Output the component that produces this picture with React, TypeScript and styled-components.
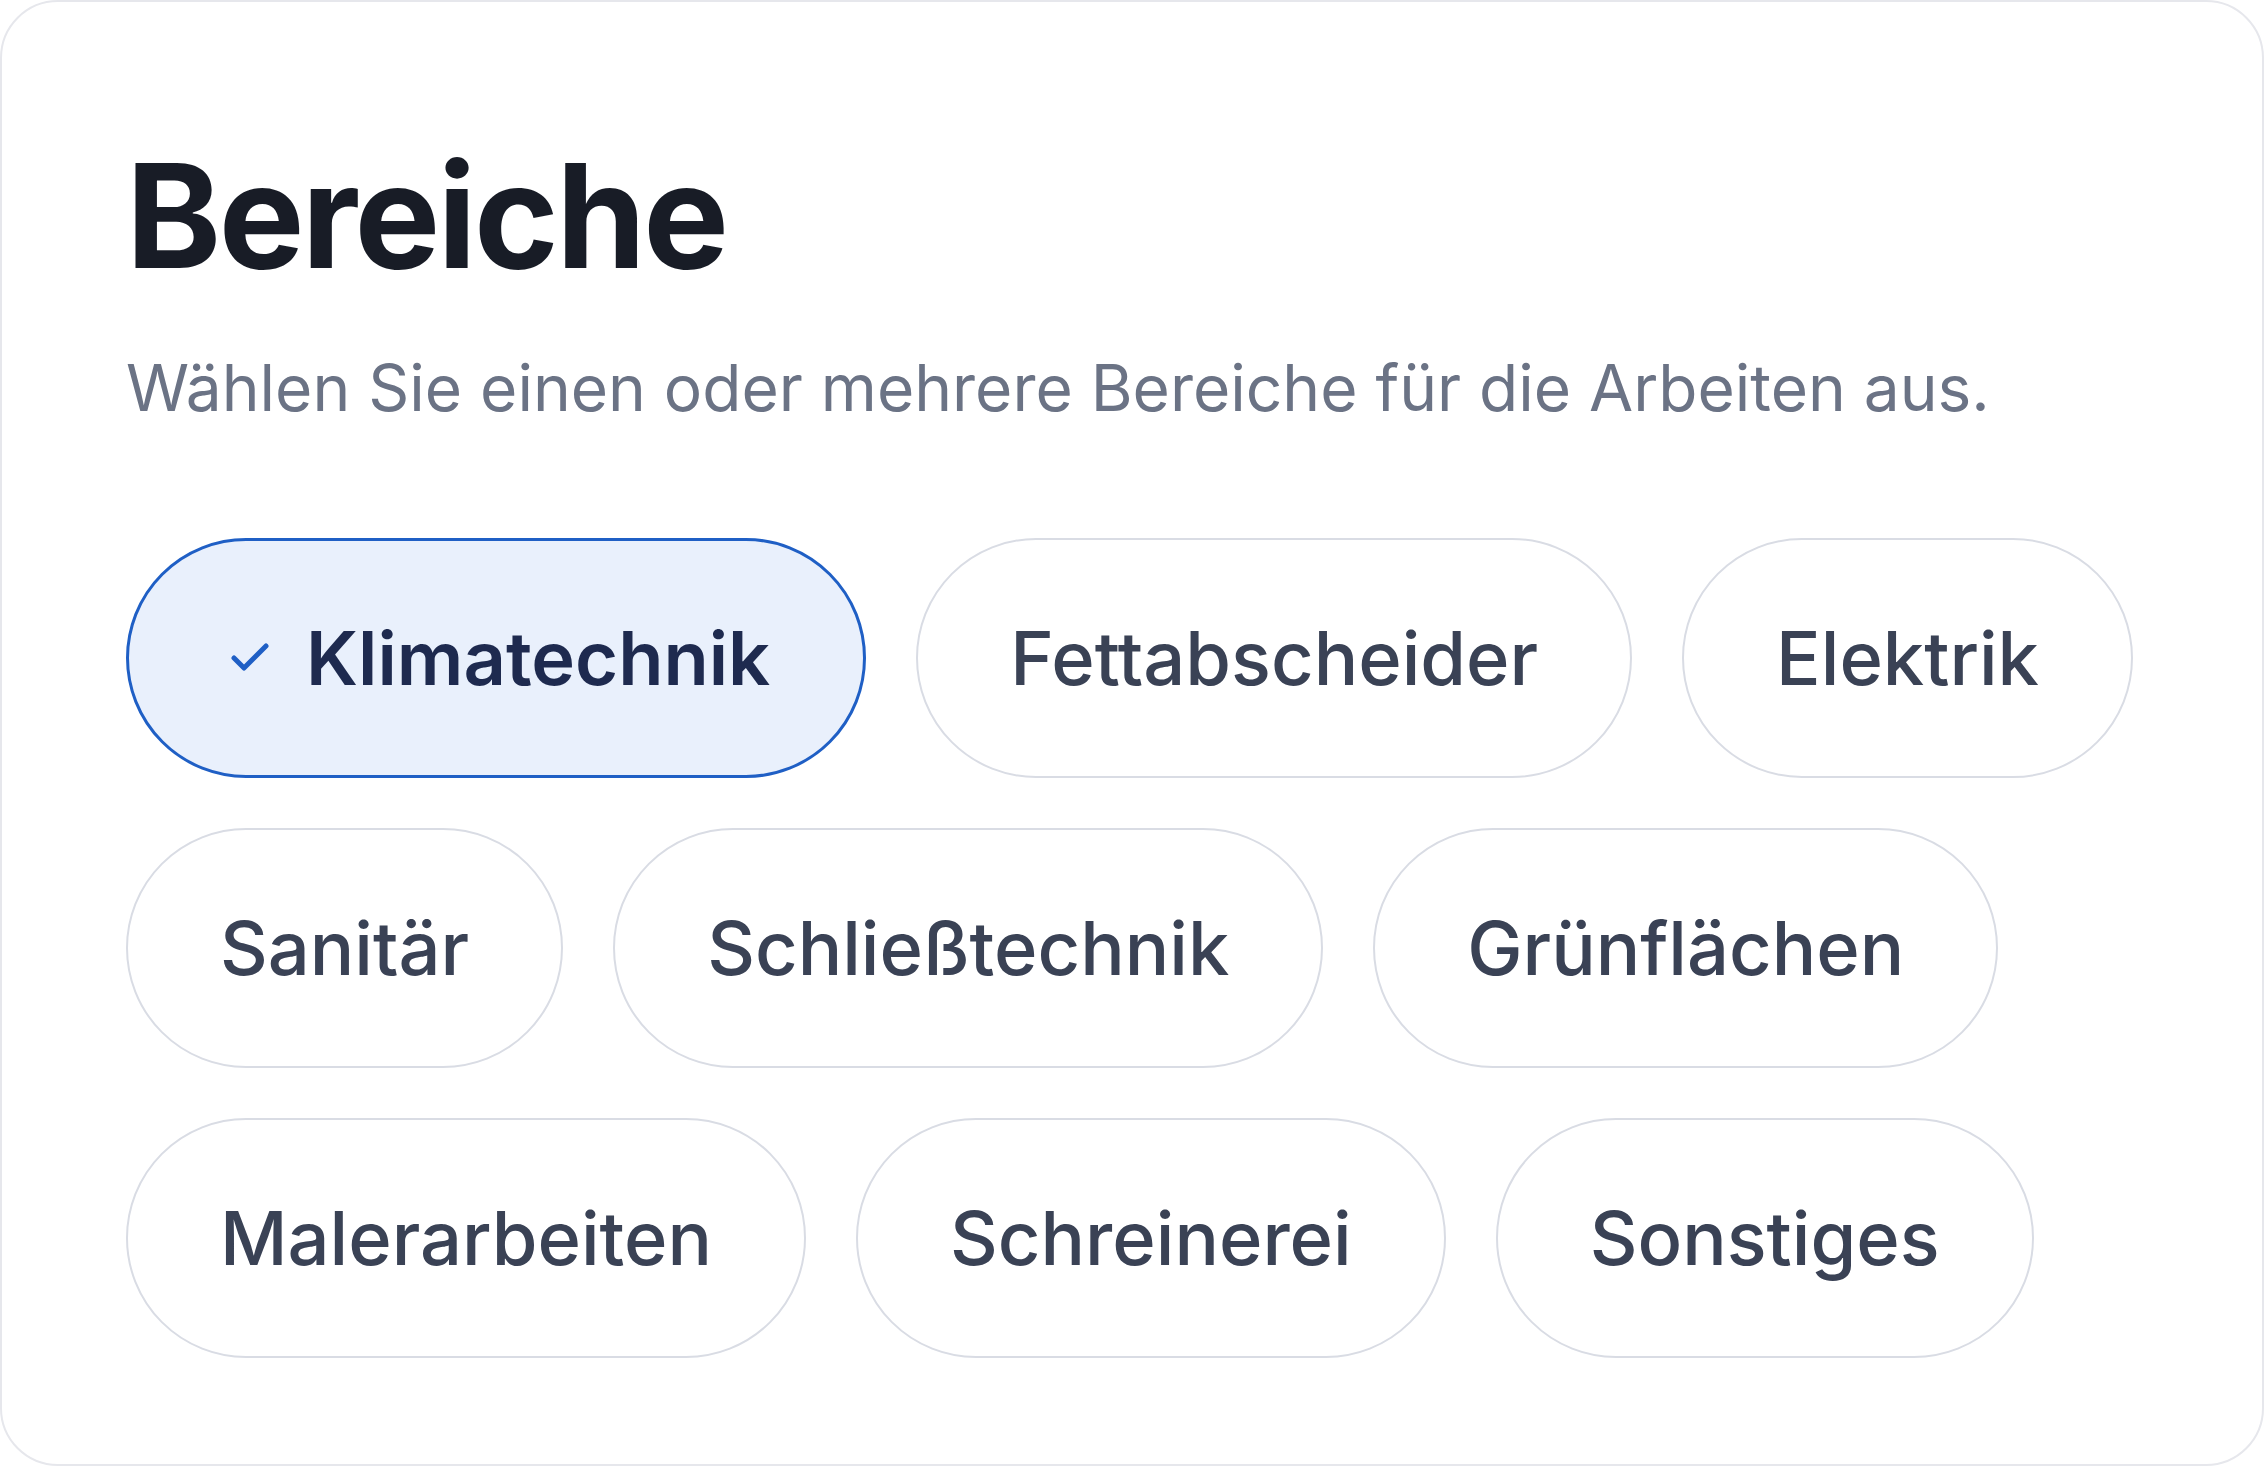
import React, { useState } from "react";
import styled, { createGlobalStyle, css } from "styled-components";

const GlobalStyle = createGlobalStyle`
  html, body {
    margin: 0;
    padding: 0;
    background: #ffffff;
  }
  body {
    font-family: Inter, "Noto Sans", "Liberation Sans", sans-serif;
    -webkit-font-smoothing: antialiased;
  }
  * { box-sizing: border-box; }
`;

const Card = styled.section`
  width: 2264px;
  height: 1466px;
  border: 2px solid #e6e7ec;
  border-radius: 58px;
  background: #ffffff;
  padding: 126px 80px 0 124px;
  display: flex;
  flex-direction: column;
  overflow: hidden;
`;

const Title = styled.h1`
  margin: 0;
  font-size: 144px;
  font-weight: 700;
  line-height: normal;
  letter-spacing: -0.018em;
  color: #181c26;
`;

const Subtitle = styled.p`
  margin: 37px 0 0 0;
  font-size: 64px;
  font-weight: 400;
  line-height: 1.5;
  color: #6b7385;
`;

const ChipList = styled.div`
  margin-top: 102px;
  display: flex;
  flex-wrap: wrap;
  gap: 50px;
  max-width: 2040px;
`;

const Chip = styled.button<{ $selected: boolean }>`
  height: 240px;
  border-radius: 9999px;
  display: inline-flex;
  align-items: center;
  gap: 32px;
  font-family: inherit;
  font-size: 74px;
  line-height: 1;
  cursor: pointer;
  ${({ $selected }) =>
    $selected
      ? css`
          padding: 0 93px 0 97px;
          border: 3px solid #1f5fc5;
          background: #e9f0fc;
          color: #1e2a4f;
          font-weight: 600;
        `
      : css`
          padding: 0 92px;
          border: 2px solid #d9dce4;
          background: #ffffff;
          color: #3a4255;
          font-weight: 500;
        `}
`;

const CheckIcon = styled.svg`
  width: 48px;
  height: 48px;
  flex: none;
  color: #1f5fc5;
`;

const items = [
  "Klimatechnik",
  "Fettabscheider",
  "Elektrik",
  "Sanitär",
  "Schließtechnik",
  "Grünflächen",
  "Malerarbeiten",
  "Schreinerei",
  "Sonstiges",
];

export default function App() {
  const [selected, setSelected] = useState<string[]>(["Klimatechnik"]);
  const toggle = (name: string) =>
    setSelected((s) => (s.includes(name) ? s.filter((x) => x !== name) : [...s, name]));

  return (
    <>
      <GlobalStyle />
      <Card>
        <Title>Bereiche</Title>
        <Subtitle>Wählen Sie einen oder mehrere Bereiche für die Arbeiten aus.</Subtitle>
        <ChipList>
          {items.map((name) => {
            const isSel = selected.includes(name);
            return (
              <Chip key={name} $selected={isSel} onClick={() => toggle(name)}>
                {isSel && (
                  <CheckIcon
                    viewBox="0 0 24 24"
                    fill="none"
                    stroke="currentColor"
                    strokeWidth={2.5}
                    strokeLinecap="round"
                    strokeLinejoin="round"
                  >
                    <path d="M20 6 9 17l-5-5" />
                  </CheckIcon>
                )}
                {name}
              </Chip>
            );
          })}
        </ChipList>
      </Card>
    </>
  );
}
